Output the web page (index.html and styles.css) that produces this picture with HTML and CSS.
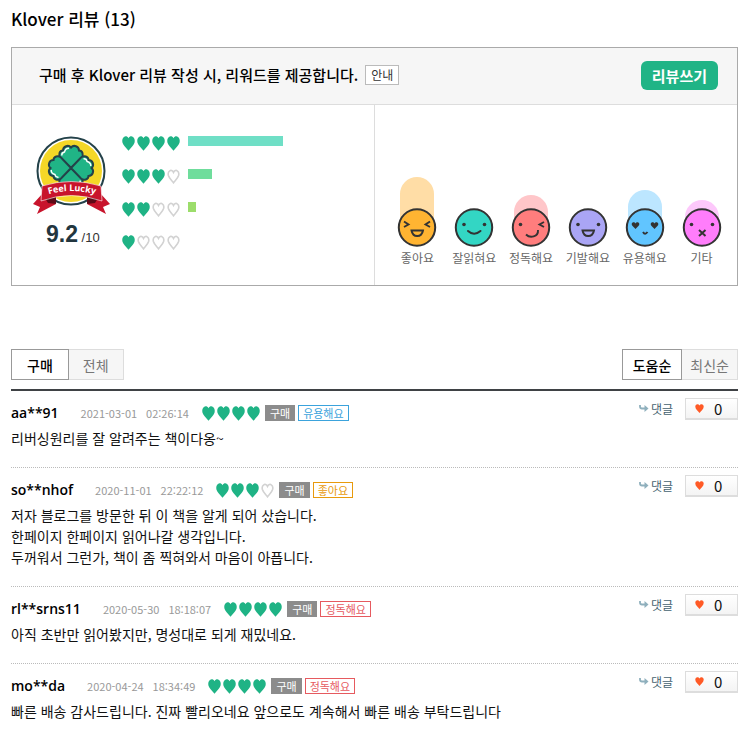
FILE: index.html
```html
<!DOCTYPE html>
<html lang="ko">
<head>
<meta charset="utf-8">
<meta name="viewport" content="width=device-width, initial-scale=1">
<title>Klover 리뷰</title>
<link rel="stylesheet" href="styles.css">
</head>
<body>
<svg class="sprite" aria-hidden="true">
  <symbol id="heart" viewBox="0 0 13 15"><path d="M6.500 2.300C5.500.2 3.400-.1 2 .9C.2 2.100 0 4.700.5 6.700C1.300 9.600 4.400 12 6.500 14.800C8.600 12 11.700 9.600 12.500 6.700C13 4.700 12.800 2.100 11 .9C9.600-.1 7.500.2 6.500 2.300Z" fill="#1fb385"/></symbol>
  <symbol id="empty" viewBox="0 0 13 15"><path d="M6.500 3.400C5.500 1.300 3.800 1 2.700 1.800C1.200 2.800 1 4.800 1.400 6.500C2.100 9.100 4.700 11.300 6.500 13.800C8.300 11.300 10.900 9.100 11.600 6.500C12 4.800 11.800 2.800 10.300 1.800C9.200 1 7.500 1.300 6.500 3.400Z" fill="#fff" stroke="#d2d2d2" stroke-width="1.600"/></symbol>
  <symbol id="h4" viewBox="0 0 58 15"><use href="#heart" width="13" height="15"/><use href="#heart" x="15" width="13" height="15"/><use href="#heart" x="30" width="13" height="15"/><use href="#heart" x="45" width="13" height="15"/></symbol>
  <symbol id="h3" viewBox="0 0 58 15"><use href="#heart" width="13" height="15"/><use href="#heart" x="15" width="13" height="15"/><use href="#heart" x="30" width="13" height="15"/><use href="#empty" x="45" width="13" height="15"/></symbol>
  <symbol id="h2" viewBox="0 0 58 15"><use href="#heart" width="13" height="15"/><use href="#heart" x="15" width="13" height="15"/><use href="#empty" x="30" width="13" height="15"/><use href="#empty" x="45" width="13" height="15"/></symbol>
  <symbol id="h1" viewBox="0 0 58 15"><use href="#heart" width="13" height="15"/><use href="#empty" x="15" width="13" height="15"/><use href="#empty" x="30" width="13" height="15"/><use href="#empty" x="45" width="13" height="15"/></symbol>
  <symbol id="reply" viewBox="0 0 10 8"><path d="M1 0v1.500q0 2 2 2H7" fill="none" stroke="#8fb0bd" stroke-width="1.800"/><path d="M5.500 0L9.500 3.500L5.500 7Z" fill="#8fb0bd"/></symbol>
  <symbol id="like" viewBox="0 0 9 9"><path d="M4.500 1.500C3.500-.2.500-.2.300 2.500C.2 5 3 6.500 4.500 9C6 6.500 8.800 5 8.700 2.500C8.500-.2 5.500-.2 4.500 1.500Z" fill="#ff5a26"/></symbol>
  <symbol id="leaf" viewBox="-13 -23 26 24" overflow="visible"><path d="M0 0L-10.500-10C-13-13-11.500-17.500-8-17.500C-8-22-2.500-23.500 0-20.500C2.500-23.500 8-22 8-17.500C11.500-17.500 13-13 10.500-10Z" fill="#20b486" stroke="#24424a" stroke-width="2"/><path d="M-9.200-12.500Q-9.500-15.500-6.500-16Q-5.500-20-2-19.800" fill="none" stroke="#fff" stroke-width="1.400"/></symbol>
</svg>

<main class="page">
  <h1 class="title">Klover 리뷰 (13)</h1>

  <section class="summary">
    <header class="notice">
      <p class="notice-text">구매 후 Klover 리뷰 작성 시, 리워드를 제공합니다.</p>
      <button class="guide" type="button">안내</button>
      <button class="write" type="button">리뷰쓰기</button>
    </header>
    <div class="stats">
      <div class="rating">
        <div class="score">
          <svg class="badge" viewBox="0 0 78 82" role="img" aria-label="Feel Lucky">
            <circle cx="38" cy="35" r="33.500" fill="#fff" stroke="#24424a" stroke-width="2"/>
            <circle cx="38" cy="35" r="31" fill="#f5d727"/>
            <use href="#leaf" x="-13" y="-23" width="26" height="24" transform="translate(38 32)"/>
            <use href="#leaf" x="-13" y="-23" width="26" height="24" transform="translate(38 32) rotate(180)"/>
            <use href="#leaf" x="-13" y="-23" width="26" height="24" transform="translate(38 32) rotate(90)"/>
            <use href="#leaf" x="-13" y="-23" width="26" height="24" transform="translate(38 32) rotate(-90)"/>
            <path d="M10 57L0 68L7 71L4 78L23 68ZM67 57L77 68L70 71L73 78L54 68Z" fill="#c8142c"/>
            <path d="M12 62L23 61V68L15 67ZM65 62L54 61V68L62 67Z" fill="#5d0a17"/>
            <path d="M9 50Q38 41 68 50L69 65Q38 54 8 65Z" fill="#c8142c" stroke="#fff" stroke-width=".6"/>
            <path id="arc" d="M12 59.500Q38 50.500 66 59.500" fill="none"/>
            <text class="badge-text"><textPath href="#arc" startOffset="50%" text-anchor="middle">Feel Lucky</textPath></text>
          </svg>
          <p class="score-value"><strong>9.2</strong> /10</p>
        </div>
        <ul class="bars">
          <li><svg class="hearts" role="img" aria-label="4"><use href="#h4"/></svg><span class="bar bar-4" style="width:95px"></span></li>
          <li><svg class="hearts" role="img" aria-label="3"><use href="#h3"/></svg><span class="bar bar-3" style="width:24px"></span></li>
          <li><svg class="hearts" role="img" aria-label="2"><use href="#h2"/></svg><span class="bar bar-2" style="width:8px"></span></li>
          <li><svg class="hearts" role="img" aria-label="1"><use href="#h1"/></svg></li>
        </ul>
      </div>
      <ul class="moods">
        <li><svg class="face" viewBox="0 0 40 72"><path d="M3 50V17a17 17 0 0 1 34 0V50Z" fill="#ffdda6"/><circle cx="20" cy="50.500" r="18.200" fill="#ffb432" stroke="#333" stroke-width="2"/><path d="M7 44.500L11.500 47.500L7 50M33 44.500L28.500 47.500L33 50M14.500 53.500H26Q25 59 20.200 59Q15.500 59 14.500 53.500Z" fill="none" stroke="#333" stroke-width="1.900"/></svg>좋아요</li>
        <li><svg class="face" viewBox="0 0 40 72"><circle cx="20" cy="50.500" r="18.200" fill="#33d6c4" stroke="#333" stroke-width="2"/><circle cx="10" cy="47.500" r="1.800" fill="#333"/><circle cx="30.500" cy="47.500" r="1.800" fill="#333"/><path d="M14 54Q20 59.500 26.500 54" fill="none" stroke="#333" stroke-width="2" stroke-linecap="round"/></svg>잘읽혀요</li>
        <li><svg class="face" viewBox="0 0 40 72"><path d="M3 50V35a17 17 0 0 1 34 0V50Z" fill="#ffc6c9"/><circle cx="20" cy="50.500" r="18.200" fill="#ff7d7d" stroke="#333" stroke-width="2"/><circle cx="9.500" cy="47.500" r="1.800" fill="#333"/><path d="M33 45L28.500 47.500L33 50M15 57.500C19 61.500 27.500 60 27 53" fill="none" stroke="#333" stroke-width="1.900"/></svg>정독해요</li>
        <li><svg class="face" viewBox="0 0 40 72"><circle cx="20" cy="50.500" r="18.200" fill="#aaa5f5" stroke="#333" stroke-width="2"/><circle cx="10" cy="47.500" r="1.800" fill="#333"/><circle cx="30.500" cy="47.500" r="1.800" fill="#333"/><path d="M14.500 53.500H26Q25 59 20.200 59Q15.500 59 14.500 53.500Z" fill="none" stroke="#333" stroke-width="1.900"/></svg>기발해요</li>
        <li><svg class="face" viewBox="0 0 40 72"><path d="M3 50V30a17 17 0 0 1 34 0V50Z" fill="#bce6ff"/><circle cx="20" cy="50.500" r="18.200" fill="#61c5ff" stroke="#333" stroke-width="2"/><path d="M10.500 52C8 49.500 6.500 48.500 6.700 46.800C7 44.800 9.600 44.600 10.500 46.400C11.400 44.600 14 44.800 14.300 46.800C14.500 48.500 13 49.500 10.500 52ZM29.500 52C27 49.500 25.500 48.500 25.700 46.800C26 44.800 28.600 44.600 29.500 46.400C30.400 44.600 33 44.800 33.300 46.800C33.500 48.500 32 49.500 29.500 52Z" fill="#333"/><path d="M18 55Q20 58.500 22.500 55" fill="none" stroke="#333" stroke-width="1.900"/></svg>유용해요</li>
        <li><svg class="face" viewBox="0 0 40 72"><path d="M3 50V40a17 17 0 0 1 34 0V50Z" fill="#fdc8fb"/><circle cx="20" cy="50.500" r="18.200" fill="#ff7dfb" stroke="#333" stroke-width="2"/><circle cx="9.500" cy="47.500" r="1.800" fill="#333"/><circle cx="30.500" cy="47.500" r="1.800" fill="#333"/><path d="M17 53L23.500 59M23.500 53L17 59" fill="none" stroke="#333" stroke-width="2"/></svg>기타</li>
      </ul>
    </div>
  </section>

  <nav class="filters">
    <div class="tabs"><button class="tab on" type="button">구매</button><button class="tab" type="button">전체</button></div>
    <div class="tabs"><button class="tab on" type="button">도움순</button><button class="tab" type="button">최신순</button></div>
  </nav>

  <div class="reviews">
    <article class="review">
      <div class="meta">
        <strong class="name">aa**91</strong>
        <time class="date"><span>2021-03-01</span><span>02:26:14</span></time>
        <svg class="hearts" role="img" aria-label="4"><use href="#h4"/></svg>
        <span class="tag bought">구매</span><span class="tag blue">유용해요</span>
        <a class="reply" href="#"><svg class="arrow"><use href="#reply"/></svg>댓글</a>
        <button class="like" type="button"><svg class="mini"><use href="#like"/></svg>0</button>
      </div>
      <p class="text">리버싱원리를 잘 알려주는 책이다옹~</p>
    </article>
    <article class="review">
      <div class="meta">
        <strong class="name">so**nhof</strong>
        <time class="date"><span>2020-11-01</span><span>22:22:12</span></time>
        <svg class="hearts" role="img" aria-label="3"><use href="#h3"/></svg>
        <span class="tag bought">구매</span><span class="tag orange">좋아요</span>
        <a class="reply" href="#"><svg class="arrow"><use href="#reply"/></svg>댓글</a>
        <button class="like" type="button"><svg class="mini"><use href="#like"/></svg>0</button>
      </div>
      <p class="text">저자 블로그를 방문한 뒤 이 책을 알게 되어 샀습니다.<br>한페이지 한페이지 읽어나갈 생각입니다.<br>두꺼워서 그런가, 책이 좀 찍혀와서 마음이 아픕니다.</p>
    </article>
    <article class="review">
      <div class="meta">
        <strong class="name">rl**srns11</strong>
        <time class="date"><span>2020-05-30</span><span>18:18:07</span></time>
        <svg class="hearts" role="img" aria-label="4"><use href="#h4"/></svg>
        <span class="tag bought">구매</span><span class="tag red">정독해요</span>
        <a class="reply" href="#"><svg class="arrow"><use href="#reply"/></svg>댓글</a>
        <button class="like" type="button"><svg class="mini"><use href="#like"/></svg>0</button>
      </div>
      <p class="text">아직 초반만 읽어봤지만, 명성대로 되게 재밌네요.</p>
    </article>
    <article class="review">
      <div class="meta">
        <strong class="name">mo**da</strong>
        <time class="date"><span>2020-04-24</span><span>18:34:49</span></time>
        <svg class="hearts" role="img" aria-label="4"><use href="#h4"/></svg>
        <span class="tag bought">구매</span><span class="tag red">정독해요</span>
        <a class="reply" href="#"><svg class="arrow"><use href="#reply"/></svg>댓글</a>
        <button class="like" type="button"><svg class="mini"><use href="#like"/></svg>0</button>
      </div>
      <p class="text">빠른 배송 감사드립니다. 진짜 빨리오네요 앞으로도 계속해서 빠른 배송 부탁드립니다</p>
    </article>
  </div>
</main>
</body>
</html>
```
FILE: styles.css
```css
* { box-sizing: border-box; }
body, h1, p, ul { margin: 0; padding: 0; }
ul { list-style: none; }
svg { display: block; flex: none; }
button { font: inherit; cursor: pointer; }
.sprite { position: absolute; width: 0; height: 0; }

body {
  background: #fff;
  color: #111;
  font-family: "Noto Sans CJK KR", sans-serif;
  font-size: 14px;
}
.page { padding: 7px 12px 0 11px; }
.title {
  font: 500 17px/24px "Noto Sans CJK KR", sans-serif;
  color: #000;
}

/* Summary box */
.summary { margin-top: 16px; border: 1px solid #aaa; }
.notice {
  display: flex;
  align-items: center;
  height: 57px;
  padding: 0 19px 2px 27px;
  background: #f6f6f6;
  border-bottom: 1px solid #ddd;
}
.notice-text { font: 500 15px/20px "Noto Sans CJK KR", sans-serif; color: #000; }
.guide {
  height: 20px;
  margin-left: 7px;
  padding: 0 5px;
  border: 1px solid #bbb;
  background: #fff;
  color: #333;
  font-size: 12px;
  line-height: 18px;
}
.write {
  height: 29px;
  margin-left: auto;
  padding: 0 11px;
  border: 0;
  border-radius: 6px;
  background: #20b486;
  color: #fff;
  font-size: 15px;
  font-weight: 700;
  line-height: 29px;
}
.stats { display: flex; height: 180px; }
.rating { display: flex; flex: 1; padding: 31px 0 0 21px; border-right: 1px solid #ddd; }
.score { width: 89px; }
.badge { width: 78px; height: 82px; }
.badge-text { font: 700 9px "Open Sans", sans-serif; fill: #fff; }
.score-value {
  padding-left: 13px;
  color: #333;
  font: 13px/32px "Liberation Sans", sans-serif;
  white-space: nowrap;
}
.score-value strong { color: #22363f; font-size: 23px; }
.bars li { display: flex; gap: 8px; height: 33px; }
.hearts { width: 58px; height: 15px; }
.bar { height: 10px; }
.bar-4 { background: #6fdfc6; }
.bar-3 { background: #6fdd9c; }
.bar-2 { background: #9cdd6b; }
.moods {
  display: grid;
  grid-template-columns: repeat(6, 1fr);
  flex: 1;
  padding: 72px 7px 0 14px;
}
.moods li {
  display: flex;
  flex-direction: column;
  align-items: center;
  color: #666;
  font-size: 12px;
  line-height: 18px;
  white-space: nowrap;
}
.face { width: 40px; height: 72px; }

/* Filters */
.filters {
  display: flex;
  justify-content: space-between;
  margin-top: 63px;
  padding-bottom: 9px;
  border-bottom: 2px solid #3f4245;
}
.tabs { display: flex; }
.tab {
  height: 31px;
  padding: 0 14px;
  border: 1px solid #ddd;
  border-left: 0;
  background: #f6f6f6;
  color: #777;
}
.tab.on { border: 1px solid #999; background: #fff; color: #000; font-weight: 500; padding: 0 15px; }
.tabs:last-child .tab { padding: 0 8px; }
.tabs:last-child .tab.on { padding: 0 10px; }

/* Review list */
.review { padding: 7px 0 18px; border-bottom: 1px dotted #bbb; }
.review:last-child { border-bottom: 0; padding-bottom: 0; }
.meta { display: flex; align-items: center; height: 30px; }
.name { font: 600 14px/20px "Open Sans", sans-serif; color: #000; margin-right: 22px; }
.date { display: flex; gap: 9px; margin-right: 13px; color: #999; font-size: 11px; }
.tag {
  height: 16px;
  margin-left: 3px;
  padding: 0 4px;
  border: 1px solid;
  font-size: 11px;
  line-height: 14px;
}
.bought { margin-left: 5px; background: #8c8c8c; border-color: #8c8c8c; color: #fff; }
.blue { color: #3ba3dc; }
.orange { color: #e89a0c; }
.red { color: #e65a5f; }
.reply {
  display: flex;
  align-items: center;
  gap: 2px;
  margin: 0 12px 8px auto;
  color: #456270;
  font-size: 12px;
  line-height: 20px;
  text-decoration: none;
}
.arrow { width: 10px; height: 8px; }
.like {
  display: flex;
  align-items: center;
  gap: 10px;
  width: 53px;
  height: 22px;
  margin-bottom: 8px;
  padding: 0 9px;
  border: 1px solid #ddd;
  border-bottom-width: 2px;
  background: linear-gradient(#fff, #f4f4f4);
  color: #111;
  font-size: 15px;
}
.mini { width: 9px; height: 9px; }
.text { font-size: 14px; line-height: 21px; }
```
